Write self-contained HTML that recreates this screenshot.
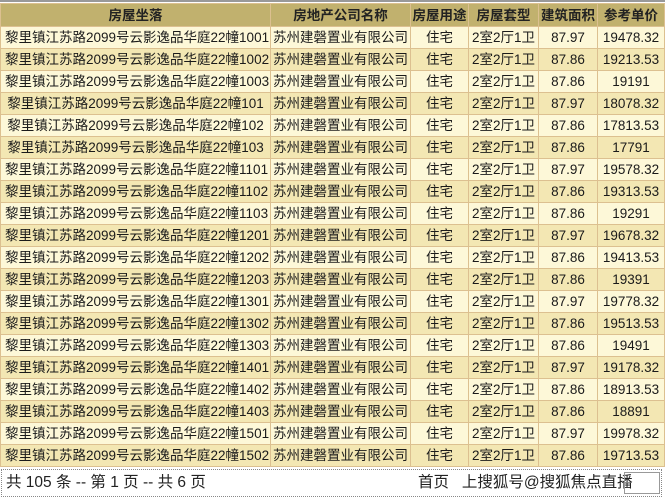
<!DOCTYPE html>
<html><head><meta charset="utf-8"><style>
body{margin:0;width:665px;height:501px;background:#fff;overflow:hidden;font-family:"Liberation Sans","Microsoft YaHei","Noto Sans CJK SC",sans-serif;}
.top{position:absolute;left:0;top:0;width:665px;height:3px;background:#fff;border-top:2px solid #999;box-sizing:border-box}
table{position:absolute;left:0;top:3px;border-collapse:collapse;width:664px;table-layout:fixed;font-size:13.5px;color:#1a1a1a}
td,th{border:1px solid #dcc090;height:21px;padding:0;text-align:center;white-space:nowrap;overflow:hidden;line-height:21px}
th{background:#c1b16e;font-weight:bold;color:#222;height:22px}
tr.a td{background:#fdf8d8}
tr.b td{background:#f3e7b3}
td.l{text-align:left;padding-left:4px}
.foot{position:absolute;left:1px;top:469px;width:661px;height:28px;border:1px dotted #888;box-sizing:border-box;font-size:15.5px;color:#222;line-height:26px}
.foot .l{position:absolute;left:4px}
.foot .r{position:absolute;left:416px}
.foot .btn{position:absolute;left:622px;top:2px;width:36px;height:22px;border:1px solid #999;box-sizing:border-box}
</style></head><body>
<div class="top"></div>
<table>
<colgroup><col style="width:270px"><col style="width:140px"><col style="width:58px"><col style="width:70px"><col style="width:59px"><col style="width:67px"></colgroup>
<tr><th>房屋坐落</th><th>房地产公司名称</th><th>房屋用途</th><th>房屋套型</th><th>建筑面积</th><th>参考单价</th></tr>
<tr class="a"><td class="l">黎里镇江苏路2099号云影逸品华庭22幢1001</td><td>苏州建磬置业有限公司</td><td>住宅</td><td>2室2厅1卫</td><td>87.97</td><td>19478.32</td></tr>
<tr class="b"><td class="l">黎里镇江苏路2099号云影逸品华庭22幢1002</td><td>苏州建磬置业有限公司</td><td>住宅</td><td>2室2厅1卫</td><td>87.86</td><td>19213.53</td></tr>
<tr class="a"><td class="l">黎里镇江苏路2099号云影逸品华庭22幢1003</td><td>苏州建磬置业有限公司</td><td>住宅</td><td>2室2厅1卫</td><td>87.86</td><td>19191</td></tr>
<tr class="b"><td>黎里镇江苏路2099号云影逸品华庭22幢101</td><td>苏州建磬置业有限公司</td><td>住宅</td><td>2室2厅1卫</td><td>87.97</td><td>18078.32</td></tr>
<tr class="a"><td>黎里镇江苏路2099号云影逸品华庭22幢102</td><td>苏州建磬置业有限公司</td><td>住宅</td><td>2室2厅1卫</td><td>87.86</td><td>17813.53</td></tr>
<tr class="b"><td>黎里镇江苏路2099号云影逸品华庭22幢103</td><td>苏州建磬置业有限公司</td><td>住宅</td><td>2室2厅1卫</td><td>87.86</td><td>17791</td></tr>
<tr class="a"><td class="l">黎里镇江苏路2099号云影逸品华庭22幢1101</td><td>苏州建磬置业有限公司</td><td>住宅</td><td>2室2厅1卫</td><td>87.97</td><td>19578.32</td></tr>
<tr class="b"><td class="l">黎里镇江苏路2099号云影逸品华庭22幢1102</td><td>苏州建磬置业有限公司</td><td>住宅</td><td>2室2厅1卫</td><td>87.86</td><td>19313.53</td></tr>
<tr class="a"><td class="l">黎里镇江苏路2099号云影逸品华庭22幢1103</td><td>苏州建磬置业有限公司</td><td>住宅</td><td>2室2厅1卫</td><td>87.86</td><td>19291</td></tr>
<tr class="b"><td class="l">黎里镇江苏路2099号云影逸品华庭22幢1201</td><td>苏州建磬置业有限公司</td><td>住宅</td><td>2室2厅1卫</td><td>87.97</td><td>19678.32</td></tr>
<tr class="a"><td class="l">黎里镇江苏路2099号云影逸品华庭22幢1202</td><td>苏州建磬置业有限公司</td><td>住宅</td><td>2室2厅1卫</td><td>87.86</td><td>19413.53</td></tr>
<tr class="b"><td class="l">黎里镇江苏路2099号云影逸品华庭22幢1203</td><td>苏州建磬置业有限公司</td><td>住宅</td><td>2室2厅1卫</td><td>87.86</td><td>19391</td></tr>
<tr class="a"><td class="l">黎里镇江苏路2099号云影逸品华庭22幢1301</td><td>苏州建磬置业有限公司</td><td>住宅</td><td>2室2厅1卫</td><td>87.97</td><td>19778.32</td></tr>
<tr class="b"><td class="l">黎里镇江苏路2099号云影逸品华庭22幢1302</td><td>苏州建磬置业有限公司</td><td>住宅</td><td>2室2厅1卫</td><td>87.86</td><td>19513.53</td></tr>
<tr class="a"><td class="l">黎里镇江苏路2099号云影逸品华庭22幢1303</td><td>苏州建磬置业有限公司</td><td>住宅</td><td>2室2厅1卫</td><td>87.86</td><td>19491</td></tr>
<tr class="b"><td class="l">黎里镇江苏路2099号云影逸品华庭22幢1401</td><td>苏州建磬置业有限公司</td><td>住宅</td><td>2室2厅1卫</td><td>87.97</td><td>19178.32</td></tr>
<tr class="a"><td class="l">黎里镇江苏路2099号云影逸品华庭22幢1402</td><td>苏州建磬置业有限公司</td><td>住宅</td><td>2室2厅1卫</td><td>87.86</td><td>18913.53</td></tr>
<tr class="b"><td class="l">黎里镇江苏路2099号云影逸品华庭22幢1403</td><td>苏州建磬置业有限公司</td><td>住宅</td><td>2室2厅1卫</td><td>87.86</td><td>18891</td></tr>
<tr class="a"><td class="l">黎里镇江苏路2099号云影逸品华庭22幢1501</td><td>苏州建磬置业有限公司</td><td>住宅</td><td>2室2厅1卫</td><td>87.97</td><td>19978.32</td></tr>
<tr class="b"><td class="l">黎里镇江苏路2099号云影逸品华庭22幢1502</td><td>苏州建磬置业有限公司</td><td>住宅</td><td>2室2厅1卫</td><td>87.86</td><td>19713.53</td></tr>
</table>
<div class="foot"><span class="l">共 105 条 -- 第 1 页 -- 共 6 页</span><span class="r">首页&nbsp;&nbsp;&nbsp;上搜狐号@搜狐焦点直播</span><div class="btn"></div></div>
</body></html>
